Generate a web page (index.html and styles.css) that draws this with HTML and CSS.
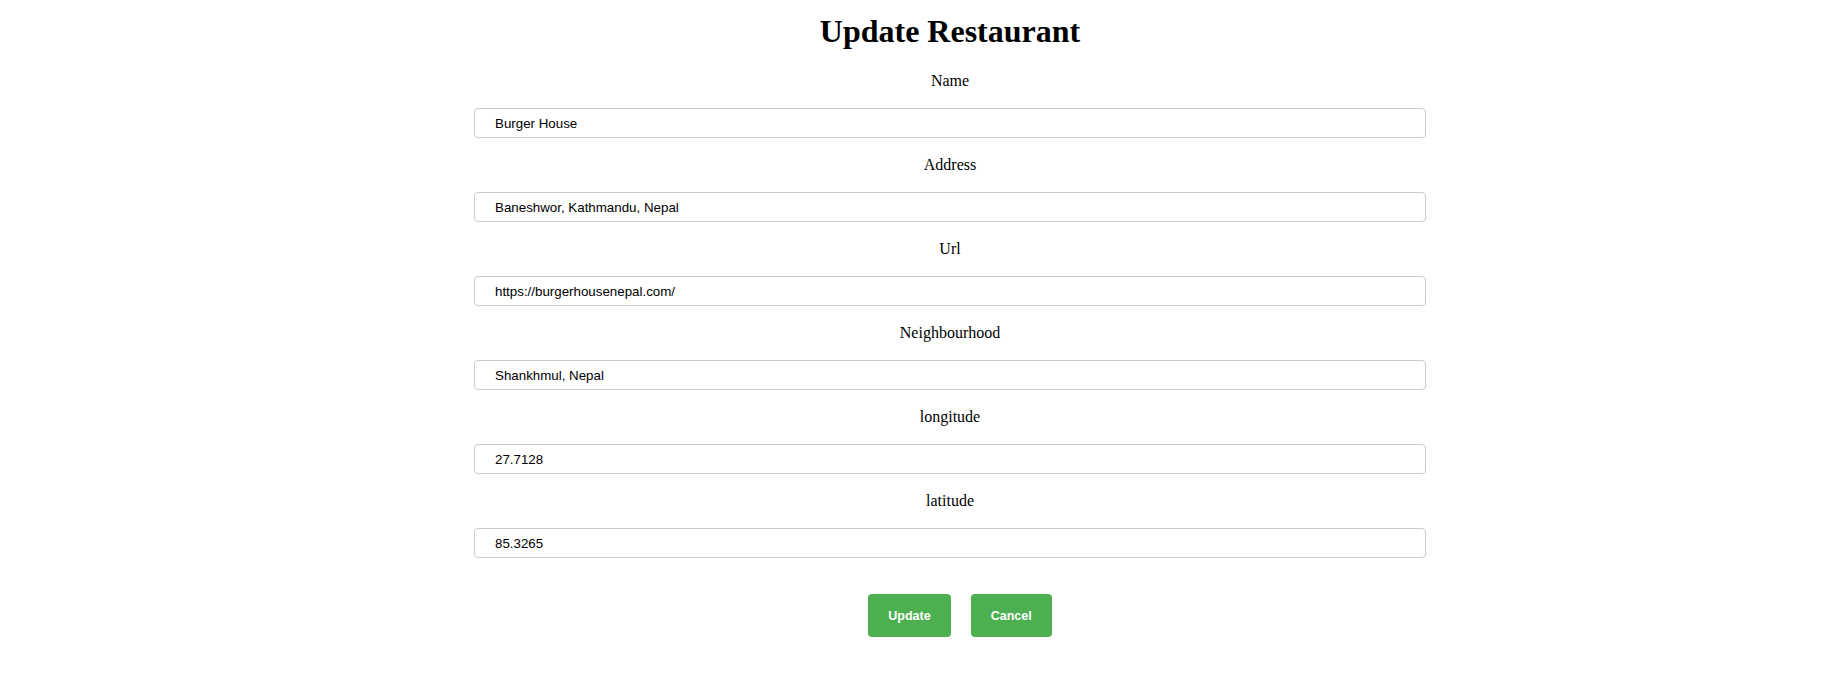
FILE: index.html
```html
<!DOCTYPE html>
<html lang="en">
<head>
<meta charset="utf-8">
<title>Update Restaurant</title>
<link rel="stylesheet" href="styles.css">
</head>
<body>
<div class="page">
  <form class="form">
    <h1 class="title">Update Restaurant</h1>
    <div class="field">
      <label class="label" for="name">Name</label>
      <input class="input" id="name" type="text" value="Burger House">
    </div>
    <div class="field">
      <label class="label" for="address">Address</label>
      <input class="input" id="address" type="text" value="Baneshwor, Kathmandu, Nepal">
    </div>
    <div class="field">
      <label class="label" for="url">Url</label>
      <input class="input" id="url" type="text" value="https://burgerhousenepal.com/">
    </div>
    <div class="field">
      <label class="label" for="nb">Neighbourhood</label>
      <input class="input" id="nb" type="text" value="Shankhmul, Nepal">
    </div>
    <div class="field">
      <label class="label" for="lng">longitude</label>
      <input class="input" id="lng" type="text" value="27.7128">
    </div>
    <div class="field">
      <label class="label" for="lat">latitude</label>
      <input class="input" id="lat" type="text" value="85.3265">
    </div>
    <div class="actions">
      <button class="btn" type="button">Update</button>
      <button class="btn" type="button">Cancel</button>
    </div>
  </form>
</div>
</body>
</html>
```

FILE: styles.css
```css
html, body {
  margin: 0;
  padding: 0;
  background: #ffffff;
}

body {
  font-family: "Liberation Serif", "Times New Roman", serif;
  color: #000000;
}

.page {
  padding-left: 65px;
  display: flex;
  justify-content: center;
}

.form {
  width: 952px;
  display: flex;
  flex-direction: column;
  align-items: stretch;
}

.title {
  margin: 13px 0 22px;
  font-size: 32px;
  line-height: 37px;
  font-weight: bold;
  text-align: center;
}

.field {
  display: flex;
  flex-direction: column;
  margin-bottom: 18px;
}

.label {
  display: block;
  text-align: center;
  font-size: 16px;
  line-height: 18px;
  margin-bottom: 18px;
}

.input {
  box-sizing: border-box;
  height: 30px;
  width: 100%;
  margin: 0;
  padding: 0 20px;
  border: 1px solid #cccccc;
  border-radius: 4px;
  font-family: "Liberation Sans", Arial, sans-serif;
  font-size: 13.33px;
  color: #000000;
  background: #ffffff;
  outline: none;
}

.actions {
  display: flex;
  justify-content: center;
  margin-top: 18px;
}

.btn {
  box-sizing: border-box;
  height: 43px;
  margin: 0 0 0 20px;
  padding: 0 20px;
  border: none;
  border-radius: 4px;
  background: #4caf50;
  color: #ffffff;
  font-family: "Liberation Sans", Arial, sans-serif;
  font-size: 12.5px;
  font-weight: bold;
  cursor: pointer;
}
```
